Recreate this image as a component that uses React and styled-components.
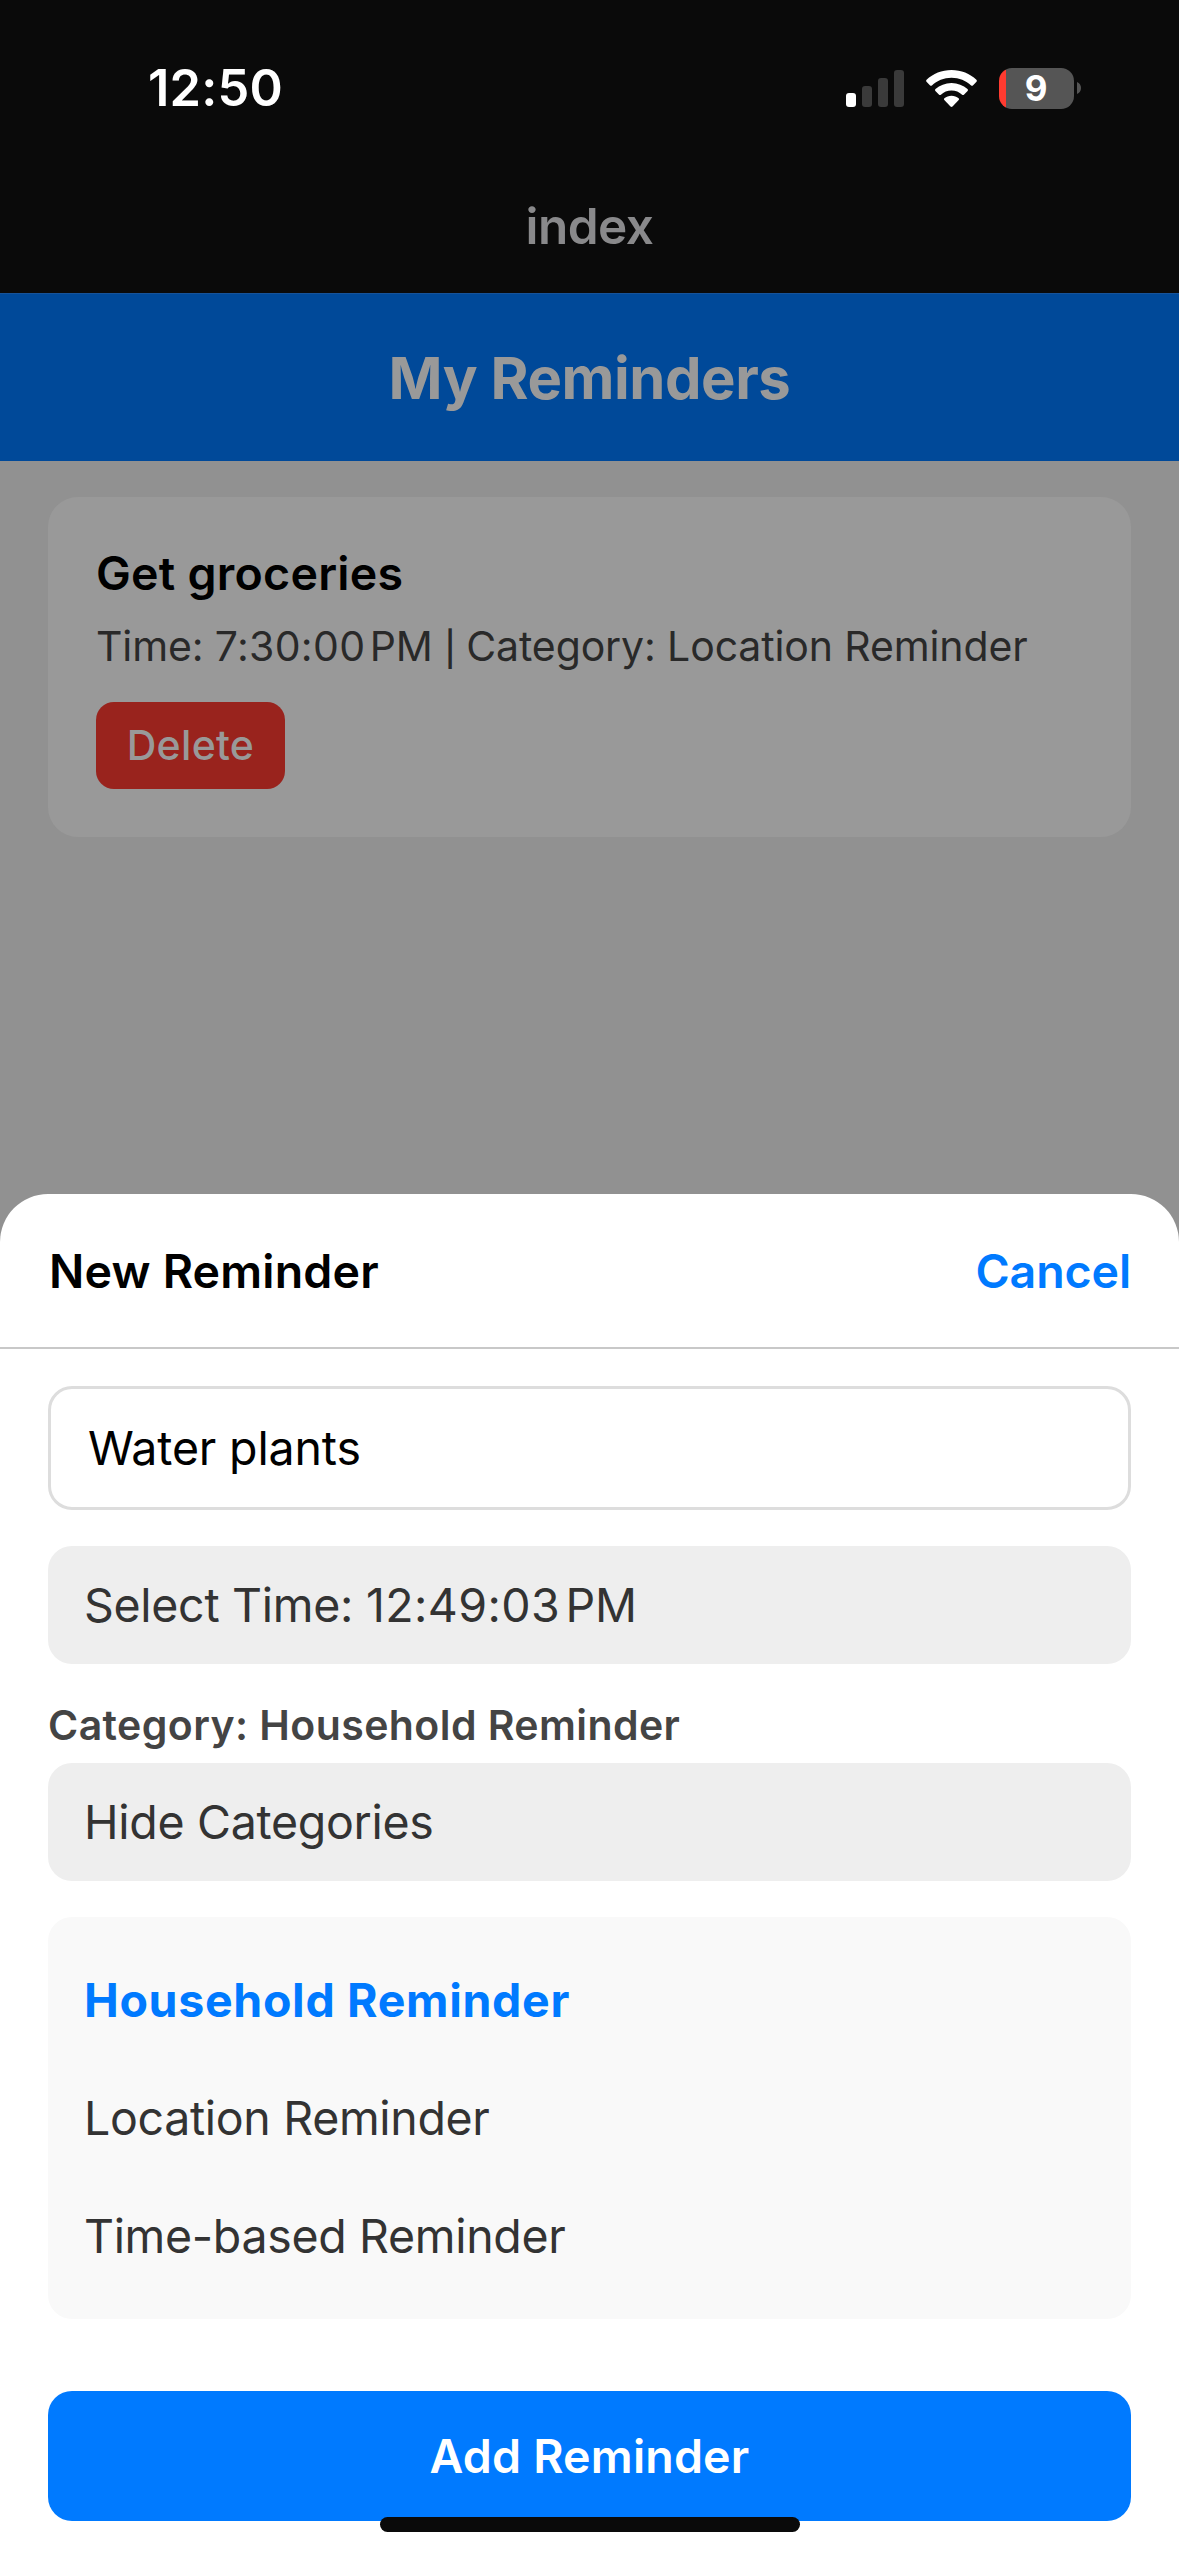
import React from "react";
import styled, { createGlobalStyle } from "styled-components";

const Global = createGlobalStyle`
  * { box-sizing: border-box; }
  body { margin: 0; background: #919191; }
  button, input { font: inherit; border: 0; margin: 0; padding: 0; background: none; text-align: left; }
`;

const Screen = styled.div`
  position: relative;
  width: 1179px;
  height: 2556px;
  overflow: hidden;
  display: flex;
  flex-direction: column;
  background: #919191;
  font-family: Inter, "Liberation Sans", sans-serif;
  font-size: 46.5px;
`;

const StatusBar = styled.div`
  height: 176px;
  flex: none;
  display: flex;
  align-items: center;
  justify-content: space-between;
  padding: 0 98px 0 148px;
  background: #0a0a0a;
  color: #fff;
`;

const Clock = styled.span`
  padding-bottom: 2px;
  font-size: 50.5px;
  font-weight: 600;
  letter-spacing: 0.2px;
`;

const StatusIcons = styled.div`
  display: flex;
  align-items: center;
  gap: 22px;
`;

const BatteryWrap = styled.div`
  display: flex;
  align-items: center;
  gap: 3px;
`;

const Battery = styled.div`
  width: 75px;
  height: 41px;
  border-radius: 13px;
  display: flex;
  align-items: center;
  justify-content: center;
  padding-right: 1px;
  background: linear-gradient(90deg, #ff3b30 7px, #555555 7px);
  font-size: 35px;
  font-weight: 700;
`;

const NavBar = styled.div`
  height: 117px;
  flex: none;
  text-align: center;
  background: #0a0a0a;
  color: #89898b;
  font-size: 49.5px;
  font-weight: 600;
  line-height: 100px;
  letter-spacing: -0.5px;
`;

const Header = styled.header`
  height: 168px;
  flex: none;
  border-top: 1px solid #16539a;
  background: #004999;
  color: #999;
  text-align: center;
  font-size: 58px;
  font-weight: 700;
  line-height: 168px;
  letter-spacing: -0.45px;
`;

const List = styled.main`
  padding: 36px 48px;
`;

const Card = styled.article`
  height: 340px;
  padding: 48px;
  border-radius: 30px;
  background: #999;
  display: flex;
  flex-direction: column;
  align-items: flex-start;
`;

const CardTitle = styled.div`
  line-height: 57px;
  font-weight: 600;
  color: #000;
  white-space: nowrap;
  letter-spacing: 0.25px;
`;

const CardMeta = styled.div`
  height: 50px;
  margin: 19px 0 31px;
  line-height: 50px;
  font-size: 41px;
  color: #292929;
  white-space: nowrap;
  letter-spacing: -0.12px;
`;

const Digits = styled.span`
  letter-spacing: ${(p) => p.$track}px;
`;

const ThinSpace = styled.span`
  letter-spacing: -3px;
`;

const Divider = styled.span`
  margin-right: -1px;
  font-size: 34px;
  font-weight: 500;
  line-height: 1;
`;

const DeleteButton = styled.button`
  width: 189px;
  height: 87px;
  padding-bottom: 1px;
  border-radius: 18px;
  background: #99231d;
  color: #999;
  font-size: 41px;
  font-weight: 500;
  text-align: center;
  letter-spacing: 0.3px;
`;

const Sheet = styled.section`
  position: absolute;
  left: 0;
  right: 0;
  bottom: 0;
  height: 1362px;
  border-radius: 48px 48px 0 0;
  background: #fff;
`;

const SheetHeader = styled.div`
  height: 155px;
  padding: 0 48px;
  border-bottom: 2px solid #c8c8c8;
  display: flex;
  align-items: center;
  justify-content: space-between;
`;

const SheetTitle = styled.span`
  padding-left: 1px;
  font-weight: 600;
  color: #000;
  letter-spacing: 0.2px;
`;

const CancelButton = styled.button`
  font-weight: 600;
  color: #007aff;
  letter-spacing: -0.1px;
`;

const SheetBody = styled.div`
  padding: 37px 48px 0;
  display: flex;
  flex-direction: column;
`;

const TextField = styled.input`
  height: 124px;
  border: 3px solid #ddd;
  border-radius: 24px;
  padding: 0 37px;
  color: #000;
  outline: none;
  letter-spacing: -0.15px;
`;

const FieldButton = styled.button`
  height: 118px;
  margin-top: ${(p) => p.$gap}px;
  padding: 0 36px;
  border-radius: 24px;
  background: #eee;
  color: #333;
  letter-spacing: -0.3px;
`;

const Label = styled.div`
  margin-top: 36px;
  line-height: 50px;
  font-size: 41px;
  font-weight: 600;
  color: #444;
  letter-spacing: 0.42px;
`;

const Options = styled.div`
  margin-top: 36px;
  padding: 24px 36px;
  border-radius: 24px;
  background: #f9f9f9;
`;

const Option = styled.div`
  line-height: 118px;
  color: ${(p) => (p.$selected ? "#007aff" : "#333")};
  font-weight: ${(p) => (p.$selected ? 700 : 400)};
  letter-spacing: ${(p) => (p.$selected ? 0.67 : -0.33)}px;
`;

const AddButton = styled.button`
  height: 130px;
  margin-top: 72px;
  border-radius: 24px;
  background: #007aff;
  color: #fff;
  font-weight: 600;
  text-align: center;
  letter-spacing: 0.2px;
`;

const HomeIndicator = styled.div`
  position: absolute;
  left: 380px;
  bottom: 24px;
  width: 420px;
  height: 15px;
  border-radius: 8px;
  background: #0a0a0a;
`;

function Signal() {
  return (
    <svg width="58" height="37" viewBox="0 0 58 37">
      <rect x="0" y="23" width="10" height="14" rx="3" fill="#fff" />
      <rect x="16" y="16" width="10" height="21" rx="3" fill="#3a3a3a" />
      <rect x="32" y="8" width="10" height="29" rx="3" fill="#3a3a3a" />
      <rect x="48" y="0" width="10" height="37" rx="3" fill="#3a3a3a" />
    </svg>
  );
}

function Wifi() {
  return (
    <svg width="51" height="37" viewBox="0 0 51 37" fill="#fff">
      <path d="M25.5 0C35.2 0 44 3.6 50.4 9.8c.6.6.6 1.3.1 1.9l-3.6 3.7c-.5.5-1.2.5-1.8 0C40 10.6 33.1 7.7 25.5 7.7S11 10.6 5.9 15.4c-.6.5-1.3.5-1.8 0L.5 11.7c-.5-.6-.5-1.3.1-1.9C7 3.6 15.8 0 25.5 0Z" />
      <path d="M25.5 12.9c6.2 0 11.7 2.3 16 6.1.6.6.6 1.3.1 1.9l-3.7 3.8c-.5.5-1.2.5-1.8 0-2.8-2.5-6.5-4.1-10.6-4.1s-7.8 1.6-10.6 4.1c-.6.5-1.3.5-1.8 0l-3.7-3.8c-.5-.6-.5-1.3.1-1.9 4.3-3.8 9.8-6.1 16-6.1Z" />
      <path d="M25.5 25.7c2.7 0 5.2 1 7.1 2.5.6.5.6 1.2.1 1.8l-6.2 6.5c-.6.6-1.4.6-2 0L18.3 30c-.5-.6-.5-1.3.1-1.8 1.9-1.5 4.4-2.5 7.1-2.5Z" />
    </svg>
  );
}

function Time({ value, track }) {
  return (
    <>
      <Digits $track={track}>{value}</Digits>
      <ThinSpace>{"\u202f"}</ThinSpace>PM
    </>
  );
}

export default function App() {
  return (
    <Screen>
      <Global />
      <StatusBar>
        <Clock>12:50</Clock>
        <StatusIcons>
          <Signal />
          <Wifi />
          <BatteryWrap>
            <Battery>9</Battery>
            <svg width="4" height="12" viewBox="0 0 4 12">
              <path d="M0 0C2.5 1 4 3.3 4 6s-1.5 5-4 6Z" fill="#555" />
            </svg>
          </BatteryWrap>
        </StatusIcons>
      </StatusBar>
      <NavBar>index</NavBar>
      <Header>My Reminders</Header>
      <List>
        <Card>
          <CardTitle>Get groceries</CardTitle>
          <CardMeta>
            Time: <Time value="7:30:00" track={0.3} /> <Divider>|</Divider> Category: Location Reminder
          </CardMeta>
          <DeleteButton>Delete</DeleteButton>
        </Card>
      </List>
      <Sheet>
        <SheetHeader>
          <SheetTitle>New Reminder</SheetTitle>
          <CancelButton>Cancel</CancelButton>
        </SheetHeader>
        <SheetBody>
          <TextField defaultValue="Water plants" />
          <FieldButton $gap={36}>
            Select Time: <Time value="12:49:03" track={0.4} />
          </FieldButton>
          <Label>Category: Household Reminder</Label>
          <FieldButton $gap={13}>Hide Categories</FieldButton>
          <Options>
            <Option $selected>Household Reminder</Option>
            <Option>Location Reminder</Option>
            <Option>Time-based Reminder</Option>
          </Options>
          <AddButton>Add Reminder</AddButton>
        </SheetBody>
        <HomeIndicator />
      </Sheet>
    </Screen>
  );
}
